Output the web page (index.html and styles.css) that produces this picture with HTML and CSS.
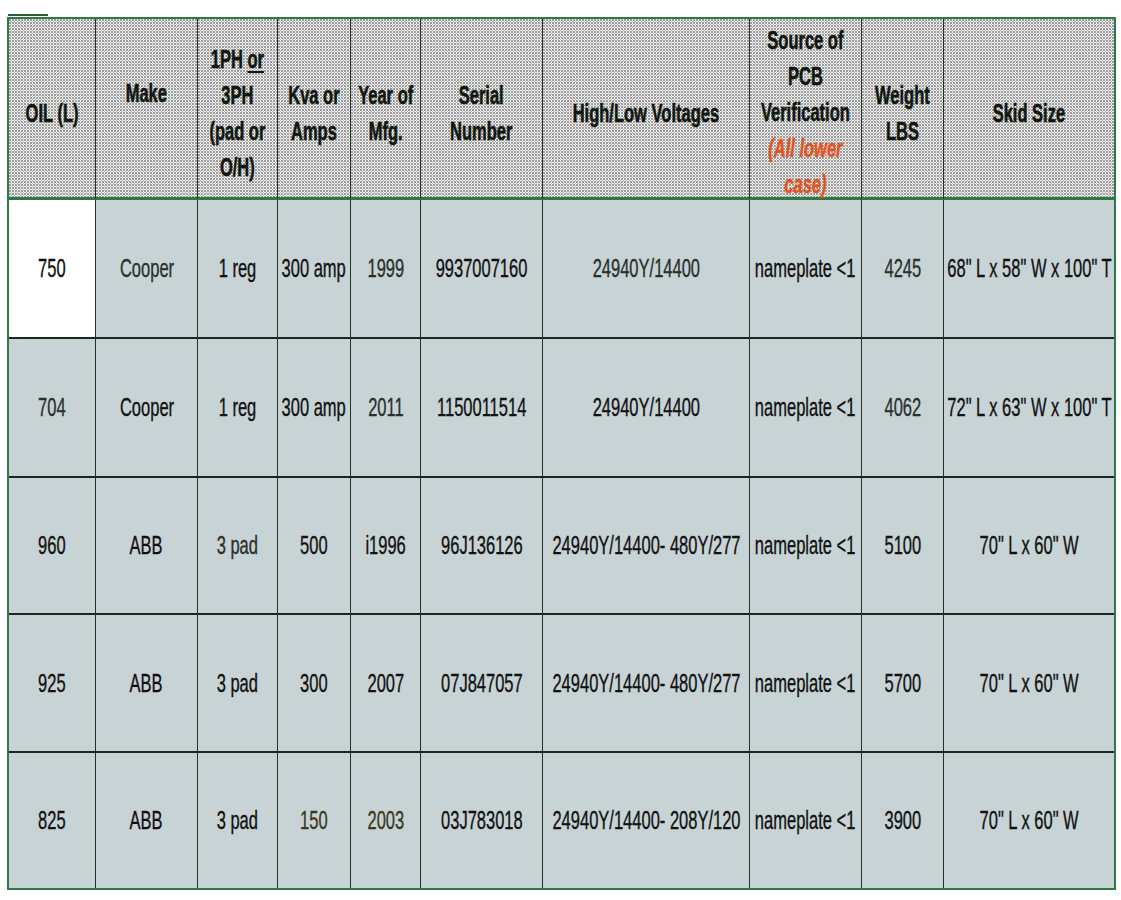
FILE: index.html
```html
<!DOCTYPE html>
<html lang="en">
<head>
<meta charset="utf-8">
<title>Transformer inventory</title>
<link rel="stylesheet" href="styles.css">
</head>
<body>
<div class="page">
  <div class="tick"></div>
  <div class="sheet">
    <div class="hd"><span class="t">OIL (L)</span></div>
    <div class="hd make"><span class="t">Make</span></div>
    <div class="hd"><span class="t">1PH <u>or</u><br>3PH<br>(pad or<br>O/H)</span></div>
    <div class="hd"><span class="t">Kva or<br>Amps</span></div>
    <div class="hd"><span class="t">Year of<br>Mfg.</span></div>
    <div class="hd"><span class="t">Serial<br>Number</span></div>
    <div class="hd"><span class="t">High/Low Voltages</span></div>
    <div class="hd src"><span class="t">Source of<br>PCB<br>Verification<br><em class="note">(All lower<br>case)</em></span></div>
    <div class="hd"><span class="t">Weight<br>LBS</span></div>
    <div class="hd last"><span class="t">Skid Size</span></div>

    <div class="c white"><span class="v">750</span></div>
    <div class="c"><span class="v soft">Cooper</span></div>
    <div class="c"><span class="v">1 reg</span></div>
    <div class="c"><span class="v">300 amp</span></div>
    <div class="c"><span class="v soft">1999</span></div>
    <div class="c"><span class="v">9937007160</span></div>
    <div class="c"><span class="v soft">24940Y/14400</span></div>
    <div class="c"><span class="v">nameplate &lt;1</span></div>
    <div class="c"><span class="v soft">4245</span></div>
    <div class="c last"><span class="v">68" L x 58" W x 100" T</span></div>

    <div class="c"><span class="v soft">704</span></div>
    <div class="c"><span class="v">Cooper</span></div>
    <div class="c"><span class="v">1 reg</span></div>
    <div class="c"><span class="v">300 amp</span></div>
    <div class="c"><span class="v soft">2011</span></div>
    <div class="c"><span class="v">1150011514</span></div>
    <div class="c"><span class="v">24940Y/14400</span></div>
    <div class="c"><span class="v">nameplate &lt;1</span></div>
    <div class="c"><span class="v soft">4062</span></div>
    <div class="c last"><span class="v">72" L x 63" W x 100" T</span></div>

    <div class="c"><span class="v">960</span></div>
    <div class="c"><span class="v">ABB</span></div>
    <div class="c"><span class="v soft">3 pad</span></div>
    <div class="c"><span class="v">500</span></div>
    <div class="c"><span class="v">i1996</span></div>
    <div class="c"><span class="v">96J136126</span></div>
    <div class="c"><span class="v">24940Y/14400- 480Y/277</span></div>
    <div class="c"><span class="v">nameplate &lt;1</span></div>
    <div class="c"><span class="v">5100</span></div>
    <div class="c last"><span class="v">70" L x 60" W</span></div>

    <div class="c"><span class="v">925</span></div>
    <div class="c"><span class="v">ABB</span></div>
    <div class="c"><span class="v">3 pad</span></div>
    <div class="c"><span class="v">300</span></div>
    <div class="c"><span class="v">2007</span></div>
    <div class="c"><span class="v">07J847057</span></div>
    <div class="c"><span class="v">24940Y/14400- 480Y/277</span></div>
    <div class="c"><span class="v">nameplate &lt;1</span></div>
    <div class="c"><span class="v">5700</span></div>
    <div class="c last"><span class="v">70" L x 60" W</span></div>

    <div class="c end"><span class="v">825</span></div>
    <div class="c end"><span class="v">ABB</span></div>
    <div class="c end"><span class="v">3 pad</span></div>
    <div class="c end"><span class="v olive">150</span></div>
    <div class="c end"><span class="v olive">2003</span></div>
    <div class="c end"><span class="v">03J783018</span></div>
    <div class="c end"><span class="v">24940Y/14400- 208Y/120</span></div>
    <div class="c end"><span class="v">nameplate &lt;1</span></div>
    <div class="c end"><span class="v">3900</span></div>
    <div class="c end last"><span class="v">70" L x 60" W</span></div>
  </div>
</div>
</body>
</html>
```

FILE: styles.css
```css
html, body {
  margin: 0;
  padding: 0;
  background: #ffffff;
}

.page {
  padding: 14px 0 0 7px;
}

.tick {
  width: 40px;
  height: 2px;
  margin-left: 1px;
  background: #2f5b3a;
  margin-bottom: 1px;
}

.sheet {
  box-sizing: border-box;
  width: 1109px;
  display: grid;
  grid-template-columns: 87px 102px 80px 73px 70px 122px 207px 112px 82px 170px;
  grid-template-rows: 181px 139px 139px 137px 138px 135px;
  border: 2px solid #2e7a47;
  background: #c8d3d6;
}

.hd,
.c {
  box-sizing: border-box;
  display: flex;
  align-items: center;
  justify-content: center;
  overflow: visible;
  border-right: 1.5px solid #223126;
  white-space: nowrap;
}

.hd {
  padding-top: 10px;
  border-bottom: 3px solid #2a7a42;
  background-color: #f1f1f1;
  background-image:
    radial-gradient(circle at 1px 1px, #9c9c9c 0.75px, rgba(255,255,255,0) 1.1px),
    radial-gradient(circle at 2.5px 2.5px, #b4b4b4 0.6px, rgba(255,255,255,0) 1px);
  background-size: 3px 3px;
  font-family: "Liberation Sans", Arial, sans-serif;
  font-weight: 700;
  font-size: 25px;
  line-height: 36px;
  color: #101610;
  text-align: center;
}

.hd .t {
  -webkit-text-stroke: 0.6px #101610;
}

.hd.make {
  padding-bottom: 40px;
}

.hd.src {
  padding-top: 8px;
}

.c {
  border-bottom: 2px solid #1c261f;
  font-family: "Liberation Sans", Arial, sans-serif;
  font-size: 25px;
  color: #111111;
  text-align: center;
}

.c .v {
  -webkit-text-stroke: 0.35px currentColor;
}

.c.end {
  border-bottom: none;
}

.last {
  border-right: none;
}

.white {
  background: #ffffff;
}

.t,
.v {
  display: inline-block;
  flex-shrink: 0;
  transform: scaleX(0.66);
  transform-origin: center center;
}

.t u {
  text-decoration-thickness: 2px;
  text-underline-offset: 3px;
}

.hd .note {
  color: #e4531b;
  font-style: italic;
  font-weight: 700;
  -webkit-text-stroke: 0.4px #e4531b;
}

.soft {
  color: #2a302c;
}

.olive {
  color: #3a3a1c;
}
```
